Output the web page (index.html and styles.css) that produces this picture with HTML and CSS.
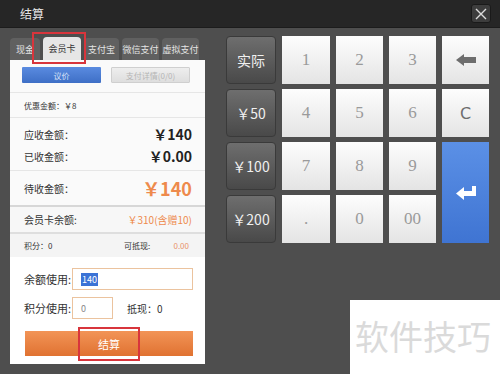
FILE: index.html
```html
<!DOCTYPE html>
<html lang="zh-CN">
<head>
    <meta charset="UTF-8">
    <title>结算</title>
    <link rel="stylesheet" href="styles.css">
</head>
<body>
    <div class="titlebar">
        <span class="title">结算</span>
        <button class="close">
            <svg width="12" height="12" viewBox="0 0 12 12"><path d="M1 1 L11 11 M11 1 L1 11" stroke="#dcdcdc" stroke-width="1.4" fill="none"/></svg>
        </button>
    </div>
    <div class="main">
        <section class="pay">
            <nav class="tabs">
                <span class="tab">现金</span>
                <span class="tab active">会员卡</span>
                <span class="tab">支付宝</span>
                <span class="tab">微信支付</span>
                <span class="tab">虚拟支付</span>
            </nav>
            <div class="sheet">
                <div class="actions">
                    <button class="btn-blue">议价</button>
                    <button class="btn-gray">支付详情(0/0)</button>
                </div>
                <div class="discount">优惠金额：￥8</div>
                <div class="totals">
                    <div class="line"><span>应收金额：</span><b>￥140</b></div>
                    <div class="line"><span>已收金额：</span><b>￥0.00</b></div>
                </div>
                <div class="line due"><span>待收金额：</span><b>￥140</b></div>
                <div class="line card"><span>会员卡余额:</span><span class="orange">￥310(含赠10)</span></div>
                <div class="points">
                    <span class="pts">积分：0</span>
                    <span class="cash">可抵现:</span>
                    <span class="cash-val">0.00</span>
                </div>
                <div class="form">
                    <div class="field">
                        <label>余额使用:</label>
                        <span class="input wide"><span class="sel">140</span></span>
                    </div>
                    <div class="field">
                        <label>积分使用:</label>
                        <span class="input short">0</span>
                        <span class="offset">抵现：0</span>
                    </div>
                    <button class="submit"><span class="mark">结算</span></button>
                </div>
            </div>
        </section>
        <div class="keypad">
            <button class="key dark">实际</button>
            <button class="key">1</button>
            <button class="key">2</button>
            <button class="key">3</button>
            <button class="key icon">
                <svg width="20" height="12" viewBox="0 0 20 12"><path d="M0 6 L8 0 L8 3 L20 3 L20 9 L8 9 L8 12 Z" fill="#6d6d6d"/></svg>
            </button>
            <button class="key dark">￥50</button>
            <button class="key">4</button>
            <button class="key">5</button>
            <button class="key">6</button>
            <button class="key clear">C</button>
            <button class="key dark">￥100</button>
            <button class="key">7</button>
            <button class="key">8</button>
            <button class="key">9</button>
            <button class="key enter">
                <svg width="20" height="14" viewBox="0 0 20 14"><path d="M16 0 H20 V10 H8 V14 L0 7.5 L8 1 V5 H16 Z" fill="#fff"/></svg>
            </button>
            <button class="key dark">￥200</button>
            <button class="key">.</button>
            <button class="key">0</button>
            <button class="key">00</button>
        </div>
    </div>
    <div class="watermark">软件技巧</div>
</body>
</html>
```

FILE: styles.css
```css
body {
    margin: 0;
    width: 500px;
    height: 374px;
    overflow: hidden;
    background: #4e4e4e;
    font-family: "Noto Sans CJK SC", "Noto Sans", sans-serif;
    position: relative;
}
button {
    font-family: inherit;
    border: none;
    padding: 0;
    margin: 0;
}
.titlebar {
    height: 27px;
    background: #262626;
    display: flex;
    align-items: center;
    justify-content: space-between;
    padding: 0 9px 0 20px;
    border-bottom: 1px solid #1c1c1c;
}
.title {
    color: #e6e6e6;
    font-size: 12px;
}
.close {
    width: 20px;
    height: 19px;
    background: #3d3d3d;
    border: 1px solid #1a1a1a;
    border-radius: 3px;
    display: flex;
    align-items: center;
    justify-content: center;
}
.main {
    display: flex;
    align-items: flex-start;
    padding: 0 10px 0 10px;
    gap: 21px;
}
.pay {
    width: 195px;
    display: flex;
    flex-direction: column;
}
.tabs {
    height: 32px;
    display: grid;
    grid-template-columns: 30px 38px 35px 37px 37px;
    column-gap: 3px;
    align-items: end;
}
.tab {
    height: 22px;
    background: #606060;
    color: #e4e4e4;
    font-size: 9px;
    border-radius: 4px 4px 0 0;
    display: flex;
    align-items: center;
    justify-content: center;
    white-space: nowrap;
}
.tab.active {
    background: #e6e6e6;
    color: #333;
    height: 23px;
    position: relative;
}
.tab.active::after {
    content: "";
    position: absolute;
    left: -11px;
    right: -5px;
    top: -5px;
    bottom: -4px;
    border: 2px solid #d8353c;
}
.sheet {
    background: #fafafa;
    height: 304px;
    display: flex;
    flex-direction: column;
}
.actions {
    display: flex;
    gap: 10px;
    padding: 7px 15px 0 12px;
    height: 25px;
    border-bottom: 1px solid #e6e6e6;
}
.btn-blue, .btn-gray {
    width: 79px;
    height: 16px;
    font-size: 8px;
    border-radius: 1px;
}
.btn-blue {
    background: linear-gradient(#5a8be0, #3e6fc6);
    color: #d8e3f8;
}
.btn-gray {
    background: linear-gradient(#eeeeee, #dedede);
    border: 1px solid #cfcfcf;
    color: #b5b5b5;
}
.discount {
    height: 24px;
    display: flex;
    align-items: center;
    padding-left: 14px;
    font-size: 8px;
    color: #333;
    border-bottom: 1px solid #e6e6e6;
}
.totals {
    padding: 5px 0 3px;
    border-bottom: 1px solid #e6e6e6;
}
.line {
    height: 22px;
    display: flex;
    align-items: center;
    justify-content: space-between;
    padding: 0 13px 0 14px;
    font-size: 10px;
    color: #333;
}
.line b {
    font-size: 14px;
    color: #222;
}
.due {
    height: 34px;
    border-bottom: 2px solid #d7d7d7;
}
.due b {
    font-size: 18px;
    color: #ee8a4c;
}
.card {
    height: 25px;
    border-bottom: 2px solid #dedede;
    background: #f7f7f7;
}
.orange {
    color: #ee8a4c;
    font-size: 10px;
}
.points {
    height: 23px;
    display: flex;
    align-items: center;
    padding: 0 16px 0 14px;
    font-size: 8px;
    color: #333;
    background: #f4f4f4;
}
.pts {
    width: 100px;
}
.cash {
    flex: 1;
}
.cash-val {
    color: #e9936a;
}
.form {
    flex: 1;
    background: #fff;
    padding: 11px 12px 0 14px;
    display: flex;
    flex-direction: column;
}
.field {
    display: flex;
    align-items: center;
    height: 22px;
    margin-bottom: 7px;
    font-size: 11px;
    color: #333;
}
.field label {
    width: 48px;
}
.input {
    border: 1px solid #ebc39e;
    background: #fff;
    display: flex;
    align-items: center;
    padding-left: 8px;
    font-size: 9px;
    color: #888;
    box-sizing: border-box;
    height: 22px;
}
.wide {
    width: 121px;
}
.short {
    width: 41px;
}
.sel {
    background: #3b73d6;
    color: #fff;
    padding: 0 1px;
}
.offset {
    margin-left: 14px;
    font-size: 10px;
}
.submit {
    margin-top: 5px;
    margin-left: 1px;
    width: 168px;
    height: 25px;
    background: linear-gradient(#f29457, #e07231);
    color: #fff;
    font-size: 11px;
    display: flex;
    align-items: center;
    justify-content: center;
}
.mark {
    position: relative;
}
.mark::after {
    content: "";
    position: absolute;
    left: -20px;
    right: -20px;
    top: -9px;
    bottom: -9px;
    border: 2px solid #d8353c;
}
.keypad {
    margin-top: 8px;
    display: grid;
    grid-template-columns: 50px 48px 47px 47px 47px;
    grid-template-rows: repeat(4, 48px);
    gap: 5px 6px;
}
.key {
    background: linear-gradient(#fdfdfd, #e4e4e4);
    color: #9a9a9a;
    font-family: "Liberation Serif", serif;
    font-size: 17px;
    display: flex;
    align-items: center;
    justify-content: center;
}
.key.dark {
    background: linear-gradient(#6e6e6e, #494949);
    border: 1px solid #3a3a3a;
    border-radius: 4px;
    color: #f0f0f0;
    font-family: "Noto Sans CJK SC", sans-serif;
    font-size: 14px;
}
.key.clear {
    font-family: "DejaVu Sans", sans-serif;
    color: #6d6d6d;
    font-size: 16px;
}
.key.enter {
    grid-row: span 2;
    background: linear-gradient(#5b90e6, #3f74d2);
}
.watermark {
    position: absolute;
    left: 350px;
    top: 300px;
    width: 150px;
    height: 74px;
    background: #fff;
    color: #dadada;
    font-size: 34px;
    line-height: 1;
    padding: 19px 0 0 5px;
    box-sizing: border-box;
    white-space: nowrap;
}
```
